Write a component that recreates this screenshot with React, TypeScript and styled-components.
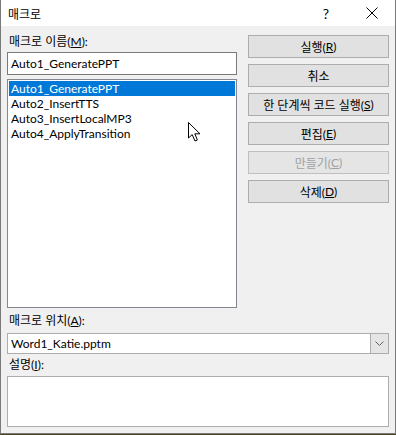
import styled, { createGlobalStyle } from "styled-components";

const Global = createGlobalStyle`
    html, body {
        margin: 0;
        padding: 0;
        background: #4b4420;
    }
    * {
        box-sizing: border-box;
    }
`;

const Dialog = styled.div`
    position: relative;
    width: 396px;
    height: 434px;
    background: #f0f0f0;
    border: 1px solid #7a7a7a;
    border-top: none;
    font-family: "Lato", "Noto Sans CJK KR", sans-serif;
    font-size: 12px;
    color: #000;
    display: flex;
    flex-direction: column;
`;

const TitleBar = styled.div`
    height: 26px;
    background: #fff;
    display: flex;
    align-items: center;
    padding-left: 7px;
`;

const Title = styled.div`
    flex: 1;
    font-size: 12px;
`;

const TitleButton = styled.div`
    width: 46px;
    height: 26px;
    display: flex;
    align-items: center;
    justify-content: center;
    font-size: 14px;
`;

const Body = styled.div`
    padding: 6px 6px 0 6px;
    display: flex;
    flex-direction: column;
`;

const Top = styled.div`
    display: flex;
    gap: 11px;
`;

const LeftCol = styled.div`
    width: 230px;
    display: flex;
    flex-direction: column;
`;

const RightCol = styled.div`
    width: 141px;
    padding-top: 3px;
    display: flex;
    flex-direction: column;
    gap: 6px;
`;

const Label = styled.div<{ $h?: number }>`
    height: ${(p) => p.$h ?? 20}px;
    padding-left: 2px;
    display: flex;
    align-items: center;
    line-height: 1;
`;

const Key = styled.span`
    text-decoration: underline;
    text-underline-offset: 1px;
`;

const TextBox = styled.div`
    height: 23px;
    background: #fff;
    border: 1px solid #7a7a7a;
    padding: 0 3px;
    display: flex;
    align-items: center;
`;

const ListBox = styled.div`
    position: relative;
    margin-top: 4px;
    height: 229px;
    background: #fff;
    border: 1px solid #828790;
    padding: 1px;
`;

const Item = styled.div<{ $selected?: boolean }>`
    height: 15px;
    line-height: 15px;
    padding-left: 2px;
    background: ${(p) => (p.$selected ? "#0078d7" : "transparent")};
    color: ${(p) => (p.$selected ? "#fff" : "#000")};
`;

const Button = styled.div<{ $disabled?: boolean }>`
    height: 23px;
    background: ${(p) => (p.$disabled ? "#e5e5e5" : "#e1e1e1")};
    border: 1px solid ${(p) => (p.$disabled ? "#bfbfbf" : "#adadad")};
    color: ${(p) => (p.$disabled ? "#a0a0a0" : "#000")};
    display: flex;
    align-items: center;
    justify-content: center;
`;

const Combo = styled.div`
    height: 21px;
    background: #fff;
    border: 1px solid #adadad;
    display: flex;
    align-items: stretch;
`;

const ComboText = styled.div`
    flex: 1;
    padding-left: 3px;
    display: flex;
    align-items: center;
`;

const ComboArrow = styled.div`
    width: 18px;
    background: #e5e5e5;
    border-left: 1px solid #adadad;
    display: flex;
    align-items: center;
    justify-content: center;
`;

const Description = styled.div`
    height: 51px;
    background: #fff;
    border: 1px solid #adadad;
`;

const Cursor = styled.svg`
    position: absolute;
    left: 180px;
    top: 42px;
`;

const macros = ["Auto1_GeneratePPT", "Auto2_InsertTTS", "Auto3_InsertLocalMP3", "Auto4_ApplyTransition"];

export default function App() {
    return (
        <>
            <Global />
            <Dialog>
                <TitleBar>
                    <Title>매크로</Title>
                    <TitleButton>?</TitleButton>
                    <TitleButton>
                        <svg width="12" height="12" viewBox="0 0 12 12">
                            <path d="M0.5 0.5 L11.5 11.5 M11.5 0.5 L0.5 11.5" stroke="#000" strokeWidth="1" />
                        </svg>
                    </TitleButton>
                </TitleBar>
                <Body>
                    <Top>
                        <LeftCol>
                            <Label>
                                매크로 이름(<Key>M</Key>):
                            </Label>
                            <TextBox>Auto1_GeneratePPT</TextBox>
                            <ListBox>
                                {macros.map((m, i) => (
                                    <Item key={m} $selected={i === 0}>
                                        {m}
                                    </Item>
                                ))}
                                <Cursor width="14" height="20" viewBox="0 0 14 20">
                                    <path
                                        d="M0.5 0.5 L0.5 16 L4.2 12.6 L7 19 L9.4 18 L6.8 11.8 L12 11.8 Z"
                                        fill="#fff"
                                        stroke="#000"
                                        strokeWidth="1"
                                        strokeLinejoin="miter"
                                    />
                                </Cursor>
                            </ListBox>
                        </LeftCol>
                        <RightCol>
                            <Button>
                                실행(<Key>R</Key>)
                            </Button>
                            <Button>취소</Button>
                            <Button>
                                한 단계씩 코드 실행(<Key>S</Key>)
                            </Button>
                            <Button>
                                편집(<Key>E</Key>)
                            </Button>
                            <Button $disabled>
                                만들기(<Key>C</Key>)
                            </Button>
                            <Button>
                                삭제(<Key>D</Key>)
                            </Button>
                        </RightCol>
                    </Top>
                    <Label $h={25}>
                        매크로 위치(<Key>A</Key>):
                    </Label>
                    <Combo>
                        <ComboText>Word1_Katie.pptm</ComboText>
                        <ComboArrow>
                            <svg width="9" height="5" viewBox="0 0 9 5">
                                <path d="M0.5 0.5 L4.5 4.5 L8.5 0.5" fill="none" stroke="#606060" strokeWidth="1" />
                            </svg>
                        </ComboArrow>
                    </Combo>
                    <Label $h={22}>
                        설명(<Key>I</Key>):
                    </Label>
                    <Description />
                </Body>
            </Dialog>
        </>
    );
}
